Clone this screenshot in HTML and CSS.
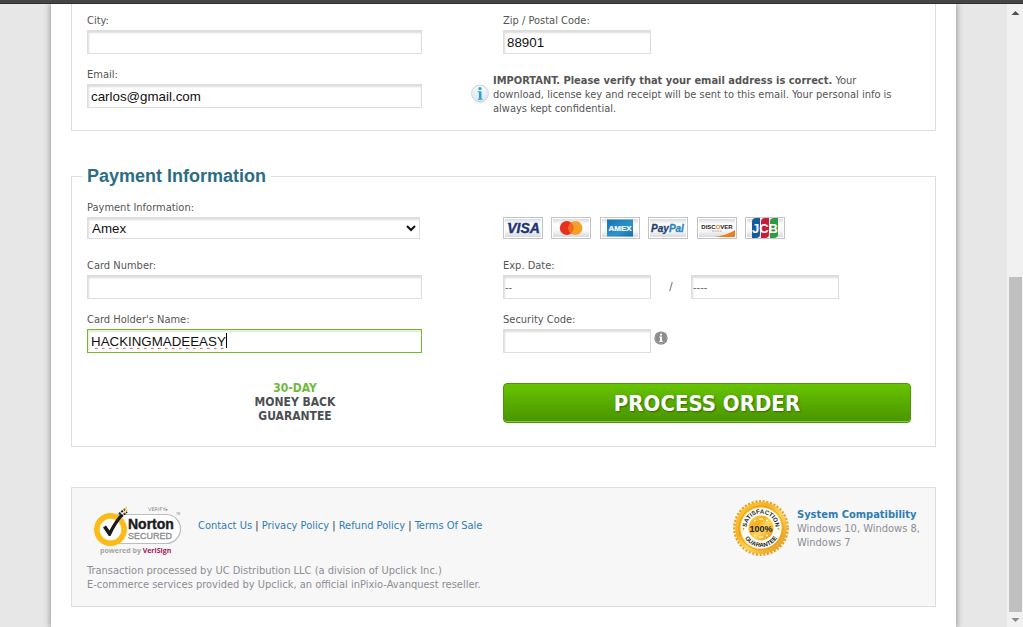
FILE: index.html
```html
<!DOCTYPE html>
<html lang="en">
<head>
<meta charset="utf-8">
<title>Checkout</title>
<link rel="stylesheet" href="styles.css">
</head>
<body>
<div class="topbar"></div>
<div class="viewport">
  <div class="backdrop">
    <main class="page">
      <form>
        <section class="panel panel-contact">
          <div class="row">
            <div class="field">
              <label for="city">City:</label>
              <input class="box" id="city" type="text">
            </div>
            <div class="field">
              <label for="zip">Zip / Postal Code:</label>
              <input class="box box-short" id="zip" type="text" value="88901">
            </div>
          </div>
          <div class="row row-note">
            <div class="field">
              <label for="email">Email:</label>
              <input class="box" id="email" type="text" value="carlos@gmail.com">
            </div>
            <div class="note">
              <svg class="note-icon" width="18" height="20" viewBox="0 0 18 20" aria-hidden="true">
                <defs><linearGradient id="ni" x1="0" y1="0" x2="0" y2="1"><stop offset="0" stop-color="#f7f9fa"/><stop offset="1" stop-color="#dde7ee"/></linearGradient></defs>
                <ellipse cx="9" cy="18.6" rx="6" ry="1" fill="#eef1f2"/>
                <circle cx="9" cy="9.5" r="8.4" fill="url(#ni)" stroke="#c3d3dd" stroke-width="1"/>
                <circle cx="9" cy="4.6" r="1.6" fill="#2fa3c4"/>
                <path d="M6.8 7.2H10.5V14.8H11.6V15.8H6.8V14.8H7.9V8.3H6.8Z" fill="#2fa3c4"/>
              </svg>
              <p><strong>IMPORTANT. Please verify that your email address is correct.</strong> Your download, license key and receipt will be sent to this email. Your personal info is always kept confidential.</p>
            </div>
          </div>
        </section>

        <fieldset class="panel panel-payment">
          <legend>Payment Information</legend>
          <div class="row row-method">
            <div class="field">
              <label for="method">Payment Information:</label>
              <select class="box box-select" id="method"><option>Amex</option></select>
            </div>
            <div class="cards">
              <svg class="card" viewBox="0 0 40 22" role="img" aria-label="Visa">
                <defs><linearGradient id="cg" x1="0" y1="0" x2="0" y2="1"><stop offset="0" stop-color="#d9dce2"/><stop offset=".3" stop-color="#fff"/><stop offset=".65" stop-color="#f8f8f9"/><stop offset="1" stop-color="#d9dade"/></linearGradient></defs>
                <rect x=".5" y=".5" width="39" height="21" fill="#fff" stroke="#c4c4c6"/><rect x="2" y="2" width="36" height="18" fill="url(#cg)"/>
                <text x="20.5" y="16" class="t-visa">VISA</text><path d="M4 6H7.500L8.500 8.500Q6.500 6.700 4 6Z" fill="#1c3478"/>
              </svg>
              <svg class="card" viewBox="0 0 40 22" role="img" aria-label="Mastercard">
                <rect x=".5" y=".5" width="39" height="21" fill="#fff" stroke="#c4c4c6"/><rect x="2" y="2" width="36" height="18" fill="url(#cg)"/>
                <circle cx="15.8" cy="11" r="7" fill="#e8301f"/><circle cx="24.4" cy="11" r="7" fill="#f6a02a"/><path d="M20.1 5.5A7 7 0 0 1 20.1 16.5A7 7 0 0 1 20.1 5.5Z" fill="#f4691f"/>
              </svg>
              <svg class="card" viewBox="0 0 40 22" role="img" aria-label="American Express">
                <defs><linearGradient id="ax" x1="0" y1="0" x2="1" y2="1"><stop offset="0" stop-color="#1872b4"/><stop offset=".6" stop-color="#2f93ca"/><stop offset="1" stop-color="#176aa9"/></linearGradient></defs>
                <rect x=".5" y=".5" width="39" height="21" fill="#fff" stroke="#c4c4c6"/><rect x="2" y="2" width="36" height="18" fill="url(#cg)"/>
                <rect x="7" y="2.5" width="26" height="17" fill="url(#ax)"/><text x="20" y="14" class="t-amex">AMEX</text>
              </svg>
              <svg class="card" viewBox="0 0 40 22" role="img" aria-label="PayPal">
                <rect x=".5" y=".5" width="39" height="21" fill="#fff" stroke="#c4c4c6"/><rect x="2" y="2" width="36" height="18" fill="url(#cg)"/>
                <text x="19.5" y="14.5" class="t-paypal">Pay<tspan class="t-pal">Pal</tspan></text>
              </svg>
              <svg class="card" viewBox="0 0 40 22" role="img" aria-label="Discover">
                <rect x=".5" y=".5" width="39" height="21" fill="#fff" stroke="#c4c4c6"/><rect x="2" y="2" width="36" height="18" fill="url(#cg)"/>
                <path d="M18 20Q31 18 38 13V20Z" fill="#ee7d22"/><text x="20" y="11.5" class="t-disc">DISC<tspan fill="#ee7d22">O</tspan>VER</text><path d="M15 14H25" stroke="#999" stroke-width=".8" stroke-dasharray="2 .6"/>
              </svg>
              <svg class="card" viewBox="0 0 40 22" role="img" aria-label="JCB">
                <rect x=".5" y=".5" width="39" height="21" fill="#fff" stroke="#c4c4c6"/><rect x="2" y="2" width="36" height="18" fill="url(#cg)"/>
                <path d="M7 5Q7 1 11 1H15V17Q15 21 11 21H7Z" fill="#175a9f"/><path d="M16 5Q16 1 20 1H24V17Q24 21 20 21H16Z" fill="#c41e3c"/><path d="M25 5Q25 1 29 1H33V17Q33 21 29 21H25Z" fill="#2f9a42"/>
                <text x="20" y="15.5" class="t-jcb">JCB</text>
              </svg>
            </div>
          </div>
          <div class="row">
            <div class="field">
              <label for="number">Card Number:</label>
              <input class="box" id="number" type="text">
            </div>
            <div class="field">
              <label for="month">Exp. Date:</label>
              <div class="expiry">
                <input class="box box-short box-date" id="month" type="text" value="--">
                <span class="slash">/</span>
                <input class="box box-short box-date" type="text" aria-label="Expiry year" value="----">
              </div>
            </div>
          </div>
          <div class="row">
            <div class="field">
              <label for="holder">Card Holder's Name:</label>
              <div class="active">
                <input class="box box-active" id="holder" type="text" value="HACKINGMADEEASY">
                <span class="caret"></span>
              </div>
            </div>
            <div class="field">
              <label for="code">Security Code:</label>
              <div class="security">
                <input class="box box-short" id="code" type="text">
                <svg class="hint" width="14" height="14" viewBox="0 0 14 14" role="img" aria-label="Security code help">
                  <circle cx="7" cy="7" r="6.6" fill="#777"/><circle cx="7" cy="7" r="5.6" fill="#8b8b8b" stroke="#b5b5b5" stroke-width=".6"/>
                  <path d="M6 2.8H8V4.5H6ZM5.3 5.6H8V9.8H8.8V11H5.2V9.8H6V6.7H5.3Z" fill="#fff"/>
                </svg>
              </div>
            </div>
          </div>
          <div class="row row-submit">
            <p class="guarantee"><span class="days">30-DAY</span><br>MONEY BACK<br>GUARANTEE</p>
            <button class="submit" type="button">PROCESS ORDER</button>
          </div>
        </fieldset>
      </form>

      <footer class="footer">
        <div class="footer-main">
          <div class="footer-top">
            <svg class="norton" width="111" height="54" viewBox="0 0 111 54" role="img" aria-label="Norton Secured, powered by VeriSign">
              <text x="61" y="5" class="n-verify">VERIFY▸</text>
              <path d="M30 8.5H79A14.500 14.500 0 0 1 79 37.5H30" fill="#fff" stroke="#bdbdbd" stroke-width="1.200"/>
              <circle cx="23.5" cy="23.5" r="16.5" fill="#fbbc17"/><circle cx="23.5" cy="23.5" r="10.8" fill="#fff"/>
              <path d="M16 21.5L19 19.5L22.5 24.5Q28 14 34 7.5L36 10Q29 18 23.5 30H21.8Z" fill="#1b1b1b"/>
              <path d="M32 8L38 3M34.5 10.5L40 6" stroke="#1b1b1b" stroke-width="2" stroke-dasharray="2 1"/><path d="M36 3.5L40.5 1.5M37 7L41 3" stroke="#fbbc17" stroke-width="1.3" stroke-dasharray="1.6 1.2"/>
              <text x="41" y="23" class="n-norton">Norton</text><text x="41" y="33" class="n-secured">SECURED</text>
              <text x="89" y="9" class="n-tm">TM</text>
              <text x="13" y="47" class="n-powered">powered by <tspan class="n-veri">VeriSign</tspan></text>
            </svg>
            <nav class="links"><a href="#">Contact Us</a> | <a href="#">Privacy Policy</a> | <a href="#">Refund Policy</a> | <a href="#">Terms Of Sale</a></nav>
          </div>
          <p class="legal">Transaction processed by UC Distribution LLC (a division of Upclick Inc.)<br>E-commerce services provided by Upclick, an official inPixio-Avanquest reseller.</p>
        </div>
        <div class="compat">
          <svg class="seal" width="56" height="58" viewBox="0 0 56 58" role="img" aria-label="Satisfaction guarantee 100%">
            <defs>
              <linearGradient id="gold" x1="0" y1="0" x2="1" y2="1"><stop offset="0" stop-color="#fdcf4a"/><stop offset=".35" stop-color="#f7b021"/><stop offset=".55" stop-color="#fdd75c"/><stop offset="1" stop-color="#df8a10"/></linearGradient>
              <path id="arcTop" d="M13.500 29A14.500 14.500 0 0 1 42.500 29"/><path id="arcBottom" d="M9 29A19 19 0 0 0 47 29"/>
            </defs>
            <circle cx="28" cy="29" r="26.600" fill="none" stroke="#eda21c" stroke-width="2.600" stroke-dasharray="2.200 1.510"/>
            <circle cx="28" cy="29" r="26" fill="url(#gold)"/>
            <circle cx="28" cy="29" r="22" fill="none" stroke="#e59a18" stroke-width=".8"/>
            <circle cx="28" cy="29" r="20.500" fill="#fffdf6"/>
            <circle cx="28" cy="29" r="12.500" fill="url(#gold)"/>
            <text class="s-arc"><textPath href="#arcTop" startOffset="50%">SATISFACTION</textPath></text>
            <text class="s-arc"><textPath href="#arcBottom" startOffset="50%">GUARANTEE</textPath></text>
            <path d="M21 21.500h2m3-1.500h4m3 1.500h2M21 36.500h2m3 1.500h4m3-1.500h2" stroke="#fff1b0" stroke-width="1.500"/>
            <circle cx="10.500" cy="30" r=".9" fill="#e59a18"/><circle cx="45.500" cy="30" r=".9" fill="#e59a18"/>
            <text x="28" y="32.500" class="s-hundred">100%</text>
          </svg>
          <p class="compat-text"><a href="#">System Compatibility</a><br>Windows 10, Windows 8, Windows 7</p>
        </div>
      </footer>
    </main>
  </div>
  <div class="scrollbar" aria-hidden="true">
    <svg width="16" height="17" viewBox="0 0 16 17"><path d="M4.500 11L8.500 7L12.500 11Z" fill="#505050"/></svg>
    <span class="track-above"></span>
    <span class="thumb"></span>
    <svg width="16" height="15" viewBox="0 0 16 15"><path d="M4.500 6L8.500 10L12.500 6Z" fill="#8a8a8a"/></svg>
  </div>
</div>
</body>
</html>
```
FILE: styles.css
```css
* { box-sizing: border-box; }

body {
  margin: 0;
  height: 100vh;
  display: flex;
  flex-direction: column;
  overflow: hidden;
  background: #e7e7e7;
  color: #555;
  font: 11px/14px Tahoma, "DejaVu Sans Condensed", "Noto Sans", sans-serif;
}

p { margin: 0; }
a { color: #2e7db5; text-decoration: none; }

.topbar { flex: none; height: 4px; background: #454545; border-bottom: 1px solid #303030; }
.viewport { flex: 1; min-height: 0; display: flex; }
.backdrop { flex: 1; overflow: hidden; }

.page {
  max-width: 905px;
  min-height: 100%;
  margin: 0 auto;
  padding: 0 20px;
  background: #fff;
  box-shadow: 0 0 6px 1px #999;
}

.panel { margin: 0; min-width: 0; border: 1px solid #ddd; padding: 0 15px; }
.panel-contact { border-top: 0; padding-top: 10px; padding-bottom: 14px; }
.panel-payment { margin-top: 35px; padding-top: 15px; padding-bottom: 23px; }

legend {
  margin-left: -5px;
  padding: 0 5px;
  color: #2b6d85;
  font: bold 18px/20px "Liberation Sans", Arial, sans-serif;
}

.row { display: grid; grid-template-columns: 416px 1fr; margin-bottom: 14px; }
.row-note { grid-template-columns: 384px 1fr; margin-bottom: 0; }
.row-method { margin-bottom: 20px; }
.row-submit { margin: 28px 0 0; }

.field { display: flex; flex-direction: column; align-items: flex-start; gap: 2px; }

.box {
  width: 335px;
  height: 24px;
  padding: 0 3px;
  border: 1px solid #ddd;
  border-radius: 0;
  background: #fff;
  box-shadow: inset 1px 2px 2px #ddd;
  color: #111;
  font-family: "Liberation Sans", Arial, sans-serif;
  outline: 0;
}
.box-short { width: 148px; }
.box-select { width: 333px; height: 22px; padding: 0; }
.box-date { padding: 0 1px; color: #666; font-size: 11px; font-family: inherit; }
.box-active {
  display: block;
  border-color: #76b82a;
  box-shadow: inset 1px 2px 2px #e4ead8;
  text-decoration: underline wavy #e04848 1px;
  text-underline-offset: 1px;
}

.active { position: relative; }
.caret { position: absolute; left: 139px; top: 4px; width: 1px; height: 15px; background: #000; }

.note { display: flex; gap: 4px; padding-top: 6px; }
.note-icon { flex: none; margin-top: 10px; }
.note p { max-width: 410px; }

.cards { display: flex; justify-content: space-between; align-self: end; width: 282px; }
.card { width: 40px; height: 22px; }
.card text { text-anchor: middle; font-family: "Liberation Sans", Arial, sans-serif; font-weight: bold; }
.t-visa { font-size: 14px; font-style: italic; fill: #1c3478; stroke: #1c3478; stroke-width: .4px; }
.t-amex { font-size: 8px; fill: #fff; stroke: #fff; stroke-width: .2px; }
.t-paypal { font-size: 10px; font-style: italic; fill: #1f3f73; stroke: #1f3f73; stroke-width: .3px; }
.t-pal { fill: #2c83bd; stroke: #2c83bd; }
.t-disc { font-size: 6px; fill: #222; }
.t-jcb { font-size: 13px; fill: #fff; }

.expiry { display: flex; align-items: center; }
.slash { width: 40px; text-align: center; }
.security { display: flex; gap: 3px; }
.hint { margin-top: 2px; }

.guarantee { text-align: center; font-size: 12px; font-weight: bold; color: #4c4f52; }
.days { color: #72b83a; }

.submit {
  width: 408px;
  height: 40px;
  margin-top: 2px;
  padding: 2px 0 0;
  border: 1px solid #4c9408;
  border-radius: 4px;
  background: linear-gradient(#67c400, #4a9400);
  box-shadow: inset 0 -1px #86cf3a;
  color: #fff;
  font: bold 22px/28px Tahoma, "DejaVu Sans Condensed", "Noto Sans", sans-serif;
  text-shadow: 1px 1px 2px #346a00;
}

.footer {
  display: flex;
  justify-content: space-between;
  margin-top: 40px;
  padding: 11px 15px 14px;
  border: 1px solid #ddd;
  background: #f7f7f7;
  color: #8d8d95;
}
.footer-main { padding-top: 7px; }
.footer-top { display: flex; }
.links { margin-top: 13px; color: #333; }
.legal { margin-top: 4px; }
.compat { display: flex; gap: 8px; }
.seal { flex: none; }
.compat-text { width: 123px; margin-top: 9px; }
.compat-text a { font-weight: bold; }

.norton text { font-family: "Liberation Sans", Arial, sans-serif; }
.norton .n-verify { font: 5px "DejaVu Sans", sans-serif; fill: #888; }
.norton .n-norton { font: bold 14px "Liberation Sans", Arial, sans-serif; fill: #1b1b1b; stroke: #1b1b1b; stroke-width: .4px; }
.norton .n-secured { font-size: 9px; fill: #8b8b8b; stroke: #8b8b8b; stroke-width: .3px; }
.norton .n-tm { font-size: 3px; fill: #888; }
.norton .n-powered { font: bold 7px "Open Sans", sans-serif; fill: #a6a6a6; }
.norton .n-veri { fill: #a31857; }

.s-arc { font: bold 6px "Liberation Sans", Arial, sans-serif; fill: #222; text-anchor: middle; }
.s-hundred { font: bold 9px "Liberation Sans", Arial, sans-serif; fill: #222; text-anchor: middle; }

.scrollbar { flex: none; width: 16px; display: flex; flex-direction: column; background: #f1f1f1; }
.scrollbar svg { flex: none; }
.track-above { flex: 256; }
.thumb { flex: 335; margin: 0 1px 0 2px; background: #c0c0c0; }
```
